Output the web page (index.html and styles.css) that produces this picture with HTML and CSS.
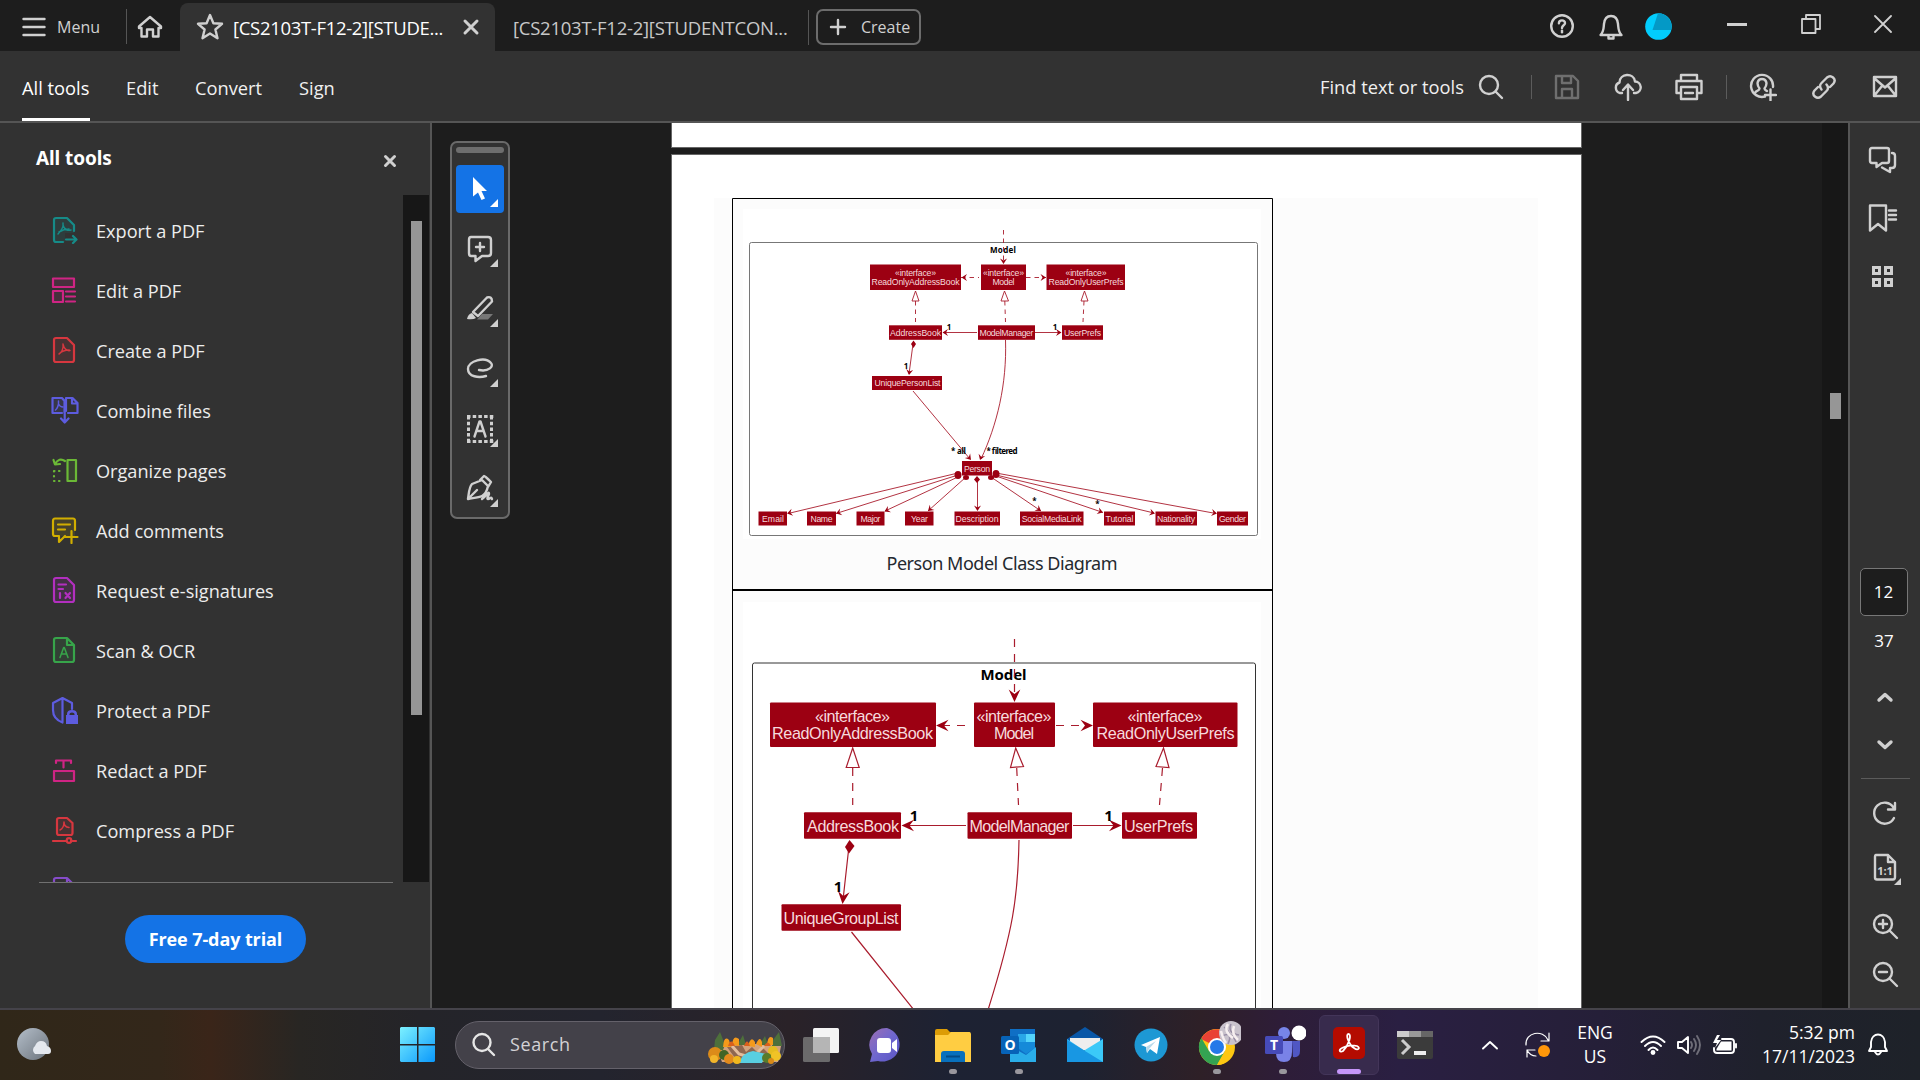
FILE: index.html
```html
<!DOCTYPE html>
<html lang="en">
<head>
<meta charset="utf-8">
<title>[CS2103T-F12-2][STUDENTCONNECT]</title>
<link rel="stylesheet" href="styles.css">
</head>
<body>
<header class="titlebar">
  <div class="menu-btn">
    <svg class="ico" width="24" height="20" viewBox="0 0 24 20"><path d="M1.500 2H22.500M1.500 10H22.500M1.500 18H22.500"/></svg>
    <span>Menu</span>
  </div>
  <div class="home-btn">
    <svg class="ico" width="26" height="24" viewBox="0 0 26 24"><path d="M2 11.500 13 2 24 11.500V13H21.500V21.500H16V14.500H10V21.500H4.500V13H2Z"/></svg>
  </div>
  <div class="tab active">
    <svg class="ico" width="28" height="28" viewBox="0 0 28 28"><path d="M14 2 17.400 10.200 26 10.800 19.400 16.500 21.500 25.200 14 20.500 6.500 25.200 8.600 16.500 2 10.800 10.600 10.200Z"/></svg>
    <span class="tab-name">[CS2103T-F12-2][STUDE...</span>
    <svg class="ico bold" width="18" height="18" viewBox="0 0 18 18"><path d="M3 3 15 15M15 3 3 15"/></svg>
  </div>
  <div class="tab"><span class="tab-name">[CS2103T-F12-2][STUDENTCON...</span></div>
  <div class="create-btn">
    <svg class="ico" width="18" height="18" viewBox="0 0 18 18"><path d="M9 2V16M2 9H16"/></svg>
    <span>Create</span>
  </div>
  <div class="window-actions">
    <svg class="ico" width="26" height="26" viewBox="0 0 26 26"><circle cx="13" cy="13" r="10.800"/><path d="M9.900 10.300C10 6.300 16.200 6.600 16 10.200 15.900 12.400 13 12.300 13 15"/><path d="M13 17.600V19.200"/></svg>
    <svg class="ico" width="26" height="28" viewBox="0 0 26 28"><path d="M2.500 22H23.500C20 18.500 20.500 15 20 11 19.500 5.500 17 3 13 3S6.500 5.500 6 11C5.500 15 6 18.500 2.500 22Z"/><path d="M10.500 23V25.500H15.500V23"/></svg>
    <svg width="27" height="27" viewBox="0 0 27 27"><circle cx="13.500" cy="13.500" r="13.300" fill="#02cdfd"/><path d="M13 0.200A13.300 13.300 0 0 1 26 17H7.500Z" fill="#0499c6"/></svg>
    <svg class="ico wide" width="22" height="20" viewBox="0 0 22 20"><path d="M1 9.500H21"/></svg>
    <svg class="ico thin" width="20" height="20" viewBox="0 0 20 20"><path d="M1 5H14.500V19H1ZM5 5V1H19V15H15"/></svg>
    <svg class="ico thin" width="18" height="18" viewBox="0 0 18 18"><path d="M1 1 17 17M17 1 1 17"/></svg>
  </div>
</header>

<nav class="toolbar">
  <div class="nav-item current">All tools</div>
  <div class="nav-item">Edit</div>
  <div class="nav-item">Convert</div>
  <div class="nav-item">Sign</div>
  <div class="toolbar-right">
    <span class="find">Find text or tools</span>
    <svg class="ico" width="26" height="26" viewBox="0 0 26 26"><circle cx="11" cy="11" r="9"/><path d="M17.500 17.500 24 24"/></svg>
    <i class="sep"></i>
    <svg class="ico dim" width="26" height="26" viewBox="0 0 26 26"><path d="M2 2H19L24 7V24H2ZM8 2V9H17V2M8 24V15H18V24"/></svg>
    <svg class="ico cloud" width="30" height="28" viewBox="0 0 30 28"><path d="M9 20H7A5.500 5.500 0 0 1 6.500 9.500C6.500 0 21 -.5 22 8.500A5.800 5.800 0 0 1 23 20H21M15 27V12M10 17 15 11.500 20 17"/></svg>
    <svg class="ico" width="28" height="28" viewBox="0 0 28 28"><path d="M6 8V2H22V8M6 20H1.500V8H26.500V20H22M6 14H22V26H6ZM10 20H18"/></svg>
    <i class="sep near"></i>
    <svg class="ico person" width="28" height="28" viewBox="0 0 28 28"><path d="M16 23.500A11 11 0 1 1 24 14M6 20C7 17 10.500 18 10.500 15.500 7 11 8.500 6 13 6S19 11 15.500 15.500C15.500 17 16 17 18 18M21.500 16.500V27.500M16 22H27"/></svg>
    <svg class="ico link" width="26" height="26" viewBox="0 0 26 26"><path d="M10.500 15.500C8 12.500 9 10.500 10.500 9L16 3.500C20 0 26 5 22.500 9.500L19 13M15.500 10.500C18 13.500 17 15.500 15.500 17L10 22.500C6 26 0 21 3.500 16.500L7 13"/></svg>
    <svg class="ico" width="26" height="24" viewBox="0 0 26 24"><path d="M2 2H24V21H2ZM2 3 13 12.500 24 3M2 21 10 11M24 21 16 11"/></svg>
  </div>
</nav>

<div class="workspace">
  <aside class="left-panel">
    <div class="panel-head"><h2>All tools</h2><svg class="ico bold" width="14" height="14" viewBox="0 0 14 14"><path d="M2.500 2.500 11.500 11.500M11.500 2.500 2.500 11.500"/></svg></div>
    <div class="tool-scroll">
      <ul class="tool-list">
        <li class="teal"><svg viewBox="0 0 28 28"><path class="tint" d="M3 2H16L23 9V17H14V26H3Z"/><path d="M12 26H5Q3 26 3 24V4Q3 2 5 2H16L23 9V15"/><path class="fine" d="M12 7C13 12 9 16 7 18M12 9C13 14 17 15 20 14M8 16Q13 13 18 13"/><path d="M15 23.500H25M22 20 25.500 23.500 22 27"/></svg>Export a PDF</li>
        <li class="pink"><svg viewBox="0 0 28 28"><path class="tint" d="M2 2.500H23V11H2ZM2 15H12V26H2Z"/><path d="M2 2.500H23V11H2ZM2 15H12V26H2ZM15 15.500H24M15 20.500H24M15 25.500H24"/></svg>Edit a PDF</li>
        <li class="red"><svg viewBox="0 0 28 28"><path class="tint" d="M5 2H16L23 9V24Q23 26 21 26H5Q3 26 3 24V4Q3 2 5 2Z"/><path d="M5 2H16L23 9V24Q23 26 21 26H5Q3 26 3 24V4Q3 2 5 2Z"/><path class="fine" d="M12 8C13 13 10 17 8 18M12 8C13 14 17 15 19 14.500M8 18Q12 14 18 14"/></svg>Create a PDF</li>
        <li class="indigo"><svg viewBox="0 0 28 28"><path class="tint" d="M1.500 2H11L14 4V17H1.500Z"/><path d="M11 17H1.500V2H11L13.500 5V17M17 17H26.500V7L21.500 2H15V15M21 2V7.500H26M13.700 15V25M10 22.500 13.700 26.500 17.500 22.500"/><path class="fine" d="M7.500 5C8 9 6 13 4.500 14M7.500 8Q9 11 12 11"/></svg>Combine files</li>
        <li class="lime"><svg viewBox="0 0 28 28"><path class="tint" d="M16.500 4H25V25H16.500Z"/><path d="M16.500 4H25V25H16.500ZM14 5Q8 1 4 8M2.500 4 4 8.500 9 8"/><path class="dots" d="M3 15H13M3 25H13M3 15V25"/></svg>Organize pages</li>
        <li class="yellow"><svg viewBox="0 0 28 28"><path class="tint" d="M2 3H24V20H2Z"/><path d="M24 14V5Q24 2.500 22 2.500H4Q2 2.500 2 5V18Q2 20 4 20H8V26L14 20M7 8.500H19M7 13.500H14M20.500 15V27M14.500 21H26.500"/></svg>Add comments</li>
        <li class="purple"><svg viewBox="0 0 28 28"><path class="tint" d="M5 2H16L23 9V24Q23 26 21 26H3V2Z"/><path d="M5 2H16L23 9V24Q23 26 21 26H5Q3 26 3 24V4Q3 2 5 2ZM7.500 8.500H15M7.500 13H12M9 17V22M14.500 17 19 22M19 17 14.500 22"/></svg>Request e-signatures</li>
        <li class="green"><svg viewBox="0 0 28 28"><path class="tint" d="M5 2H16L23 9V26H3V2Z"/><path d="M5 2H16L23 9V24Q23 26 21 26H5Q3 26 3 24V4Q3 2 5 2ZM16 2V9H23"/><path class="fine" d="M9 21.500 12.700 11.500H13.300L17 21.500M10.500 18H15.500"/></svg>Scan &amp; OCR</li>
        <li class="indigo"><svg viewBox="0 0 28 28"><path class="tint" d="M2 7 11.500 2V26Q2 22 2 15Z"/><path d="M21 13V7L11.500 2 2 7V14Q2 23 11.500 26.500M11.500 2V26"/><path class="solid" fill-rule="evenodd" d="M15 19H16V18Q16 14 21 14T26 18V19H27V28H15ZM18.500 19H23.500V18Q23.500 16.500 21 16.500T18.500 18Z"/></svg>Protect a PDF</li>
        <li class="pink"><svg viewBox="0 0 28 28"><path class="tint" d="M3 15H23V25H3Z"/><path d="M3 15H23V25H3ZM5 7V4.500H20V7M12.500 4.500V11.500"/></svg>Redact a PDF</li>
        <li class="red"><svg viewBox="0 0 28 28"><path class="tint" d="M6 2H16L21.500 7V19H6Z"/><path d="M8 2H16L21.500 7V17Q21.500 19 19.500 19H8Q6 19 6 17V4Q6 2 8 2ZM2 25H15M20 25H25"/><circle cx="18" cy="24.500" r="2.300"/><path class="fine" d="M13 6Q13 12 9 14M13 6Q13 11 18 11.500"/></svg>Compress a PDF</li>
        <li class="violet"><svg viewBox="0 0 28 28"><path d="M5 2H16L23 9V24Q23 26 21 26H5Q3 26 3 24V4Q3 2 5 2ZM16 2V9H23"/></svg></li>
      </ul>
      <div class="scroll-track"><div class="scroll-thumb"></div></div>
    </div>
    <div class="trial"><button>Free 7-day trial</button></div>
  </aside>

  <main class="viewer">
    <div class="quick-tools">
      <div class="grip"></div>
      <div class="quick on"><svg width="48" height="48" viewBox="0 0 48 48"><path d="M17 12 31 26H25.500L29 33.500 25.500 35 22 27.500 17 31.500Z" fill="#fff"/><path class="corner" d="M42 34V42H34Z"/></svg></div>
      <div class="quick"><svg class="ico" width="48" height="48" viewBox="0 0 48 48"><path d="M15 12H32Q35 12 35 15V28Q35 31 32 31H26L19.500 36V31H15Q13 31 13 28V15Q13 12 15 12ZM24 18V26M20 22H28"/><path class="corner" d="M42 34V42H34Z"/></svg></div>
      <div class="quick"><svg class="ico" width="48" height="48" viewBox="0 0 48 48"><path d="M17 27 31 12.500Q36 11 36 16.500L22 31Z"/><path d="M11 34Q12 29 16 28L20 33Q17 35 11 34Z" fill="#d0d0d0" stroke="none"/><path d="M26 29H37L32 34.500H21Z" fill="#777" stroke="none"/><path class="corner" d="M42 34V42H34Z"/></svg></div>
      <div class="quick"><svg class="ico" width="48" height="48" viewBox="0 0 48 48"><path d="M23 25C33 27 38 21 35 18 29 11 12 16 12 24 12 32 23 33 30 31"/><path class="corner" d="M42 34V42H34Z"/></svg></div>
      <div class="quick"><svg class="ico" width="48" height="48" viewBox="0 0 48 48"><path class="marquee" d="M12.500 11V37M35.500 11V37"/><path class="marquee" d="M11 11.500H38M11 36.500H38"/><path d="M18.500 31.500 23.500 16.500H24.500L29.500 31.500M20.500 26H27.500"/><path class="corner" d="M42 34V42H34Z"/></svg></div>
      <div class="quick"><svg class="ico" width="48" height="48" viewBox="0 0 48 48"><path d="M12 34C13 28 13 22 16 19L26 15 32 21C31 26 30 29 26 31 22 33 16 33 12 34ZM12 34 21 25M24 15 28 11Q29 11 35 17L32 22M26 34C30 31 32 27 33 28S30 34 32 34 35 31 36 34"/><path class="corner" d="M42 34V42H34Z"/></svg></div>
    </div>
    <div class="pages">
      <div class="page previous"></div>
      <div class="page">
        <svg class="diagram" width="909" height="854" viewBox="672 155 909 854">
          <defs>
            <g id="open-head"><path d="M-5.500-3.500 0 0-5.500 3.500-3.500 0Z"/></g>
            <g id="big-head"><path d="M-12.500-5.800 0 0-12.500 5.800-8 0Z"/></g>
          </defs>
          <rect class="paper" x="714" y="198" width="824" height="830"/>
          <rect x="743" y="209" width="518" height="330" fill="#fff"/>
          <rect x="743" y="602" width="518" height="430" fill="#fff"/>
          <path class="table" d="M732.500 1010V198.500H1272.500V1010"/><path class="table heavy" d="M732 590H1273"/>
          <text class="caption" x="1002" y="570" textLength="231">Person Model Class Diagram</text>

          <g class="small">
            <rect class="frame" x="749.500" y="242.500" width="508" height="293" rx="2"/>
            <text class="lbl" x="1003" y="252.500" textLength="26">Model</text>
            <path class="edge dash" d="M1003.500 230V261M961 277.500H979M1026 277.500H1046M915.500 301V322M1004.800 301 1005.500 322M1084 301 1083 322"/>
            <path class="edge" d="M977 332.500H943M1035 332.500H1061M913 344 909 374M913 391 970 459M1005.500 340C1007 384 997 425 981 459"/>
            <path class="edge hollow" d="M915.500 291 919 301H912ZM1004.500 291 1008.500 301H1001ZM1084.500 291 1088 301H1081Z"/>
            <path class="edge" d="M958 473 788 513.500M958 475 836 513.500M960 476 885 511M966 477 928 511M977.500 478V510M991 477 1041 511M996 476 1103 512.500M996 475 1154 513M996 473 1216 513.500"/>
            <g class="fill">
              <use href="#open-head" transform="translate(1003.500 264) rotate(90)"/><use href="#open-head" transform="translate(961.500 277.500) rotate(180)"/><use href="#open-head" transform="translate(1046 277.500)"/>
              <use href="#open-head" transform="translate(942.500 332.500) rotate(180)"/><use href="#open-head" transform="translate(1061.500 332.500)"/><use href="#open-head" transform="translate(909 375) rotate(97)"/>
              <use href="#open-head" transform="translate(971 460) rotate(50)"/><use href="#open-head" transform="translate(980 460) rotate(110)"/>
              <use href="#open-head" transform="translate(787 513.500) rotate(167)"/><use href="#open-head" transform="translate(836 513.500) rotate(162)"/><use href="#open-head" transform="translate(884.500 511.500) rotate(154)"/><use href="#open-head" transform="translate(928 511) rotate(138)"/><use href="#open-head" transform="translate(977.500 511) rotate(90)"/>
              <use href="#open-head" transform="translate(1041 511) rotate(35)"/><use href="#open-head" transform="translate(1103 512.500) rotate(19)"/><use href="#open-head" transform="translate(1155 513.500) rotate(14)"/><use href="#open-head" transform="translate(1217 513.500) rotate(10)"/>
              <path d="M913.500 340.500 916 344 913.500 348 911 344ZM977 476 980 479.500 977 483 974 479.500Z"/>
              <ellipse cx="958" cy="475" rx="3.500" ry="4"/><ellipse cx="996" cy="474" rx="3.500" ry="4"/><ellipse cx="966" cy="477.500" rx="3" ry="2.500"/><ellipse cx="991" cy="477.500" rx="3" ry="2.500"/>
            </g>
            <g class="fill">
              <rect x="870" y="264.500" width="91" height="25.500"/><rect x="981" y="264.500" width="45" height="25.500"/><rect x="1046.500" y="264.500" width="78.500" height="25.500"/>
              <rect x="889" y="325.300" width="53" height="14.500"/><rect x="978" y="325.300" width="57" height="14.500"/><rect x="1062" y="325.300" width="41" height="14.500"/>
              <rect x="872" y="376" width="70" height="14"/><rect x="962" y="461" width="30" height="14.500"/>
              <rect x="758.500" y="511.500" width="28.500" height="14"/><rect x="807" y="511.500" width="29" height="14"/><rect x="856.500" y="511.500" width="28" height="14"/><rect x="905" y="511.500" width="28.500" height="14"/><rect x="954.500" y="511.500" width="45.500" height="14"/><rect x="1020" y="511.500" width="63.500" height="14"/><rect x="1104" y="511.500" width="31" height="14"/><rect x="1155.500" y="511.500" width="41.500" height="14"/><rect x="1217" y="511.500" width="31" height="14"/>
            </g>
            <g class="node">
              <text x="915.500" y="276" textLength="41">«interface»</text><text x="915.500" y="285" textLength="88">ReadOnlyAddressBook</text>
              <text x="1003.500" y="276" textLength="41">«interface»</text><text x="1003.500" y="285" textLength="22">Model</text>
              <text x="1086" y="276" textLength="41">«interface»</text><text x="1086" y="285" textLength="75">ReadOnlyUserPrefs</text>
              <text x="915.500" y="336" textLength="51">AddressBook</text><text x="1006.500" y="336" textLength="54">ModelManager</text><text x="1082.500" y="336" textLength="37">UserPrefs</text>
              <text x="907.500" y="386" textLength="66">UniquePersonList</text><text x="977" y="471.500" textLength="26">Person</text>
              <text x="773" y="521.700" textLength="22">Email</text><text x="821.500" y="521.700" textLength="22">Name</text><text x="870.500" y="521.700" textLength="20">Major</text><text x="919.500" y="521.700" textLength="17">Year</text><text x="977" y="521.700" textLength="43">Description</text><text x="1051.700" y="521.700" textLength="60">SocialMediaLink</text><text x="1119.500" y="521.700" textLength="28">Tutorial</text><text x="1176" y="521.700" textLength="38">Nationality</text><text x="1232.500" y="521.700" textLength="27">Gender</text>
            </g>
            <g class="lbl"><text x="949" y="330">1</text><text x="1055" y="330">1</text><text x="906" y="369">1</text><text x="958.500" y="454" textLength="15">* all</text><text x="1002" y="454" textLength="31">* filtered</text><text x="1034.500" y="504">*</text><text x="1097.500" y="507">*</text></g>
          </g>

          <g class="large">
            <path class="frame dark" d="M752.500 1010V665Q752.500 663 754.500 663H1253.500Q1255.500 663 1255.500 665V1010"/>
            <text class="lbl" x="1003.500" y="680" textLength="46">Model</text>
            <path class="edge dash" d="M1014.500 639V697M965 725.500H940M1056 725.500H1090M852.700 768V805M1016.700 768 1018.500 805M1162.500 768 1159.500 805"/>
            <path class="edge hollow" d="M852.700 748 859.200 767.500H846.200ZM1015.700 748 1023.500 766.500 1010.500 767.500ZM1163.500 748 1169 767.500 1156 766.500Z"/>
            <path class="edge" d="M966 825.500H905M1073 825.500H1118M849 846 843 900M851.500 932 914 1010M1019 840C1018 898 1013 930 988 1010"/>
            <g class="fill">
              <use href="#big-head" transform="translate(1014.500 702) rotate(90)"/><use href="#big-head" transform="translate(936 725.500) rotate(180)"/><use href="#big-head" transform="translate(1093 725.500)"/><use href="#big-head" transform="translate(901.500 825.500) rotate(180)"/><use href="#big-head" transform="translate(1121.500 825.500)"/><use href="#big-head" transform="translate(842.500 904) rotate(96)"/>
              <path d="M849.500 840 854.500 846 849 853.500 845 847Z"/>
              <rect x="770" y="702.500" width="166" height="44.500" rx="1"/><rect x="974" y="702.500" width="81" height="44.500" rx="1"/><rect x="1093" y="702.500" width="144.500" height="44.500" rx="1"/>
              <rect x="804" y="812.300" width="97" height="26.500" rx="1"/><rect x="967.500" y="812.300" width="104.500" height="26.500" rx="1"/><rect x="1122" y="812.300" width="75" height="26.500" rx="1"/><rect x="781.500" y="904.300" width="119.500" height="26.500" rx="1"/>
            </g>
            <g class="node">
              <text x="852.500" y="721.500" textLength="75">«interface»</text><text x="852.500" y="738.700" textLength="161">ReadOnlyAddressBook</text>
              <text x="1014" y="721.500" textLength="75">«interface»</text><text x="1014" y="738.700" textLength="40">Model</text>
              <text x="1165" y="721.500" textLength="75">«interface»</text><text x="1165.500" y="738.700" textLength="138">ReadOnlyUserPrefs</text>
              <text x="853" y="831.500" textLength="92">AddressBook</text><text x="1019.500" y="831.500" textLength="100">ModelManager</text><text x="1158.500" y="831.500" textLength="69">UserPrefs</text><text x="841" y="923.500" textLength="115">UniqueGroupList</text>
            </g>
            <g class="lbl"><text x="914" y="820.500">1</text><text x="1108.500" y="820.500">1</text><text x="838" y="891.500">1</text></g>
          </g>
        </svg>
      </div>
    </div>
    <div class="doc-track"><div class="doc-thumb"></div></div>
  </main>

  <aside class="right-rail">
    <svg class="ico" width="30" height="30" viewBox="0 0 30 30"><path d="M4 3H19Q21 3 21 5V16Q21 18 19 18H14L8.500 22V18H4Q2 18 2 16V5Q2 3 4 3ZM24 8Q27 8 27 11V20Q27 23 24 23H22V27L14 22.500"/></svg>
    <svg class="ico" width="30" height="30" viewBox="0 0 30 30"><path d="M2 2.500H18V27.500L10 21 2 27.500ZM21 7.500H28M21 12H28M21 16.500H28"/></svg>
    <svg class="ico boxy" width="30" height="30" viewBox="0 0 30 30"><path d="M5.500 6.500H11.500V12.500H5.500ZM17.500 6.500H23.500V12.500H17.500ZM5.500 18.500H11.500V24.500H5.500ZM17.500 18.500H23.500V24.500H17.500Z"/></svg>
    <div class="page-now">12</div>
    <div class="page-total">37</div>
    <svg class="ico chev" width="20" height="12" viewBox="0 0 20 12"><path d="M4 9 10 3.500 16 9"/></svg>
    <svg class="ico chev" width="20" height="12" viewBox="0 0 20 12"><path d="M4 3 10 8.500 16 3"/></svg>
    <div class="rail-line"></div>
    <svg class="ico" width="30" height="30" viewBox="0 0 30 30"><path d="M24 19A10.500 10.500 0 1 1 23.500 8.500M25 4V10.500H18"/></svg>
    <svg class="ico" width="34" height="34" viewBox="0 0 34 34"><path d="M8 4H20L27 11V26Q27 28.500 25 28.500H9Q7 28.500 7 26.500V6Q7 4 8 4ZM20 4V11H27"/><text x="17" y="24">1:1</text><path class="corner" d="M33 27V34H26Z"/></svg>
    <svg class="ico" width="30" height="30" viewBox="0 0 30 30"><circle cx="13" cy="12" r="9"/><path d="M19.500 18.500 27 26M13 8V16M9 12H17"/></svg>
    <svg class="ico" width="30" height="30" viewBox="0 0 30 30"><circle cx="13" cy="12" r="9"/><path d="M19.500 18.500 27 26M9 12H17"/></svg>
  </aside>
</div>

<footer class="taskbar">
  <svg class="weather" width="36" height="36" viewBox="0 0 36 36"><circle cx="16" cy="17" r="16" fill="url(#moon)"/><defs><linearGradient id="moon" x2="1" y2="1"><stop stop-color="#b4bec9"/><stop offset="1" stop-color="#6c747d"/></linearGradient></defs><path d="M18 27A5 5 0 0 1 18 19Q20 14 24 14 29 14 30 19 34 20 34 24 34 27 31 27Z" fill="#e4e8ee"/></svg>
  <svg class="start" width="36" height="36" viewBox="0 0 36 36"><defs><linearGradient id="win" gradientUnits="userSpaceOnUse" x1="0" y1="0" x2="36" y2="36"><stop stop-color="#7cf1ff"/><stop offset="1" stop-color="#0796fb"/></linearGradient></defs><path fill="url(#win)" d="M1 0H17V17H0V1ZM18.500 0H34L35 1V17H18.500ZM0 18.500H17V35H1L0 34ZM18.500 18.500H35V34L34 35H18.500Z"/></svg>
  <div class="search">
    <svg class="ico" width="26" height="26" viewBox="0 0 26 26"><circle cx="11" cy="10.500" r="8.500"/><path d="M17 17 23 23"/></svg>
    <span>Search</span>
    <svg class="scene" width="75" height="32" viewBox="0 0 75 32"><path d="M8 15 20 12H70L73 14 70 30H14Z" fill="#d3a37d"/><path d="M19 15 34 13 38 20 44 15 50 21 54 15 61 22 47 30H30Z" fill="#8f6750"/><path d="M24 14 31 22 38 24M56 14 50 20" fill="none" stroke="#e3bd9c" stroke-width="3"/><path d="M31 31Q35 20 45 19L58 22 54 31Z" fill="#59cfe1"/><path d="M7 8 12 0 14 5 17 13 15 18H6ZM65 8 71 0 74 14H64ZM31 10 35 3 38 13H31ZM54 9 57 4 60 13H54Z" fill="#4e703b"/><path d="M15 15Q16 3 21 8L23 15ZM24 13Q25 2 31 7L31 14ZM40 14Q43 3 47 10L47 15ZM48 12Q52 3 54 10V15ZM59 13Q60 2 65 6V13Z" fill="#f49a1b"/><path d="M20 14Q23 5 27 14ZM36 14Q39 5 42 14ZM56 14Q60 7 63 14Z" fill="#d9601c"/><circle cx="7" cy="22" r="7" fill="#dc8b19"/><circle cx="6" cy="27" r="4" fill="#f2b52a"/><circle cx="16" cy="23" r="5" fill="#3f6526"/><circle cx="21" cy="27" r="5" fill="#e28a1c"/><circle cx="29" cy="28" r="4" fill="#f0b71e"/><circle cx="65" cy="19" r="5" fill="#e5bd20"/><circle cx="59" cy="26" r="5" fill="#587c2b"/><circle cx="68" cy="24" r="5" fill="#f0c326"/><circle cx="63" cy="29" r="3" fill="#d98a18"/></svg>
  </div>
  <div class="apps">
    <div class="app"><svg width="38" height="38" viewBox="0 0 38 38"><rect x="11" y="2" width="26" height="25" rx="1.500" fill="#f4f4f4"/><rect x="1" y="11" width="27" height="25" rx="1.500" fill="#777" opacity=".85"/><path d="M11 11H28V27H11Z" fill="#b5b5b5"/></svg></div>
    <div class="app"><svg width="38" height="38" viewBox="0 0 38 38"><defs><linearGradient id="chat" x2="1" y2="1"><stop stop-color="#9d6fb3"/><stop offset=".5" stop-color="#6f67cf"/><stop offset="1" stop-color="#5a55c4"/></linearGradient></defs><path d="M19 2A17 17 0 1 1 10 35L2 36 4 28A17 17 0 0 1 19 2Z" fill="url(#chat)"/><rect x="9" y="12" width="14" height="15" rx="3" fill="#fff"/><path d="M24 17 29 13V26L24 22Z" fill="#fff"/></svg></div>
    <div class="app running"><svg width="38" height="38" viewBox="0 0 38 38"><path d="M1 5Q1 3 3 3H13L16 6H36V14H1Z" fill="#dc9c06"/><path d="M1 9H14L17 6H35Q37 6 37 8V36H1Z" fill="#ffcd42"/><path d="M7 36V28Q7 25 10 25H28Q31 25 31 28V36Z" fill="#0870bd"/><path d="M12 30.500H26" stroke="#034b86" stroke-width="2"/></svg></div>
    <div class="app running"><svg width="38" height="38" viewBox="0 0 38 38"><path d="M10 3H35V35H10Z" fill="#0f6fc5"/><path d="M18 8H26V16H18Z" fill="#29a6e8"/><path d="M26 8H35V16H26Z" fill="#54d4fb"/><path d="M18 16H35V22L26 28 18 22Z" fill="#158ad9"/><path d="M10 20 26 29 36 21V36H10Z" fill="#2aaee9"/><rect x="1" y="10" width="18" height="18" rx="1.500" fill="#0763b7"/><text class="logo-letter" x="10" y="24">O</text></svg></div>
    <div class="app"><svg width="38" height="38" viewBox="0 0 38 38"><path d="M1 13 19 1 37 13V20H1Z" fill="#0957a7"/><path d="M4 12H34V24H4Z" fill="#eee"/><path d="M1 13 19 25 1 36Z" fill="#37bbf1"/><path d="M37 13V36H1L19 24Z" fill="#3bc9f8"/><path d="M1 14 37 36H1Z" fill="#1897e3"/></svg></div>
    <div class="app"><svg width="38" height="38" viewBox="0 0 38 38"><circle cx="19" cy="19" r="16.500" fill="#1d98d4"/><path d="M9 19 28 11 25 28 18 23 15 27 14 21Z" fill="#fff"/><path d="M14 21 24 15 17 23 15 27Z" fill="#b8d9ea"/></svg></div>
    <div class="app running"><svg width="48" height="48" viewBox="0 0 48 48"><circle cx="24" cy="26" r="18" fill="#fdc712"/><path d="M24 26 8 18A18 18 0 0 1 40 18Z" fill="#e94235"/><path d="M8.400 17 16 30 32 30 24 44A18 18 0 0 1 8.400 17Z" fill="#34a352"/><path d="M24 44 32 30 40 20A18 18 0 0 1 24 44Z" fill="#fdc712"/><circle cx="24" cy="26" r="9" fill="#fff"/><circle cx="24" cy="26" r="7" fill="#2579e8"/><circle cx="38" cy="12" r="12" fill="#c9c2cc"/><path d="M31 6Q40 12 35 23M38 3Q34 12 46 14M29 15Q39 10 43 21" fill="none" stroke="#988da5" stroke-width="1.500"/><path d="M35 3Q30 10 40 17M41 5Q38 13 45 19M28 10Q30 18 33 22" fill="none" stroke="#f7eff0" stroke-width="2.500"/></svg></div>
    <div class="app running"><svg width="46" height="40" viewBox="0 0 46 40"><circle cx="24" cy="8" r="6" fill="#7785e8"/><path d="M16 16H32V27Q32 37 24 37T16 28Z" fill="#7982e7"/><path d="M32 16H40V26Q40 33 33 32Z" fill="#5057c3"/><rect x="5" y="11" width="18" height="18" rx="1.500" fill="#464bb8"/><text class="logo-letter" x="14" y="25">T</text><circle cx="39" cy="8" r="7.500" fill="#fff"/></svg></div>
    <div class="app focused"><svg width="34" height="34" viewBox="0 0 34 34"><rect x="1" y="1" width="32" height="32" rx="5" fill="#b40b00"/><path d="M16.500 8C20 8 17 19 11 25 8 27 6 24 10 22 15 19 21 19 25 20 29 22 26 25 22 22 17 19 13 8 16.500 8Z" fill="none" stroke="#fff" stroke-width="1.800"/></svg></div>
    <div class="app"><svg width="38" height="38" viewBox="0 0 38 38"><path d="M1 7H37V31Q37 33 35 33H3Q1 33 1 31Z" fill="#3b3b3b"/><path d="M1 5H13V11H1Z" fill="#ccc"/><path d="M13 5H25V11H13Z" fill="#999"/><path d="M25 5H37V11H25Z" fill="#666"/><path d="M6 14 13 21 6 28" fill="none" stroke="#ccc" stroke-width="3"/><path d="M18 27H30" stroke="#eee" stroke-width="4"/></svg></div>
  </div>
  <div class="tray">
    <svg class="ico" width="18" height="12" viewBox="0 0 18 12"><path d="M2 9.500 9 3 16 9.500"/></svg>
    <svg class="ico sync" width="26" height="28" viewBox="0 0 26 28"><path d="M1 14C0 1 18-2 23 9M24 2V10H16M11 25Q5 25 2 19M10 19H2V26"/><circle cx="19" cy="20" r="6" fill="#ff970a" stroke="none"/></svg>
    <div class="lang">ENG<br>US</div>
    <svg class="ico wifi" width="26" height="22" viewBox="0 0 26 22"><path d="M1.500 8Q13-3 24.500 8M5 12Q13 4 21 12M8.500 16Q13 11 17.500 16"/><circle cx="13" cy="18.500" r="1.500" fill="#fff"/></svg>
    <svg class="ico speaker" width="26" height="22" viewBox="0 0 26 22"><path d="M2 8H6L12 3V19L6 14H2Z"/><path d="M15 8Q17 11 15 14M18 5Q22 11 18 17M21 2Q27 11 21 20" opacity=".35"/></svg>
    <svg class="ico battery" width="26" height="22" viewBox="0 0 26 22"><path d="M10 5H19Q22 5 22 8V16Q22 19 19 19H5Q2 19 2 16V14M24 10V13.500"/><path d="M9 7.500H19.500V16.500H4.500V15Z" fill="#fff" stroke="none"/><path d="M5 1 1 9H5L3 14 9 6H5L8 1Z" fill="#fff" stroke="none"/></svg>
    <div class="clock">5:32 pm<br>17/11/2023</div>
    <svg class="ico" width="22" height="24" viewBox="0 0 22 24"><path d="M2 18H20L18 14V9C17-1 5-1 4 9V14ZM8 19Q11 24 14 19"/></svg>
  </div>
</footer>
</body>
</html>
```
FILE: styles.css
```css
* { box-sizing: border-box; }
body { margin: 0; width: 1920px; height: 1080px; overflow: hidden; display: flex; flex-direction: column; background: #1d1d1d; color: #f0f0f0; font-family: "Open Sans", "Noto Sans", sans-serif; font-size: 18px; }
svg { display: block; flex: none; }
.ico { fill: none; stroke: #d0d0d0; stroke-width: 2.4; stroke-linejoin: round; stroke-linecap: round; }
.bold { stroke-width: 3; }
.thin { stroke-width: 1.8; }
.wide { stroke-width: 3; stroke-linecap: butt; }
.dim { stroke: #6f6f6f; }
.corner { fill: #d0d0d0; stroke: none; }

.titlebar { height: 51px; flex: none; display: flex; align-items: center; background: #1d1d1d; white-space: nowrap; }
.menu-btn { width: 127px; height: 35px; margin-top: 2px; padding-left: 22px; display: flex; align-items: center; gap: 12px; border-right: 1px solid #555; font-size: 16px; color: #d0d0d0; }
.menu-btn span { margin-left: -1px; }
.home-btn { width: 53px; padding-left: 10px; margin-top: 2px; }
.tab { height: 48px; align-self: flex-end; display: flex; align-items: center; color: #c8c8c8; font-size: 18.500px; width: 315px; padding-left: 18px; }
.tab:not(.active) { width: 313px; }
.tab-name { letter-spacing: -0.250px; }
.tab.active { background: #323232; border-radius: 8px 8px 0 0; color: #fff; padding-left: 16px; }
.tab.active .tab-name { width: 229px; margin-left: 9px; letter-spacing: -0.320px; }
.create-btn { width: 105px; height: 36px; margin-top: 3px; border: 2px solid #6c6c6c; border-radius: 7px; margin-left: 8px; display: flex; align-items: center; padding-left: 11px; gap: 14px; font-size: 16px; color: #d0d0d0; position: relative; }
.create-btn::before { content: ""; position: absolute; left: -10px; top: -1px; height: 35px; width: 1px; background: #555; }
.window-actions { margin-left: auto; padding-right: 28px; display: flex; align-items: center; }
.window-actions svg:nth-child(1) { margin-top: 1px; }
.window-actions svg:nth-child(2) { margin: 3px 0 0 23px; }
.window-actions svg:nth-child(3) { margin: 2px 0 0 21px; }
.window-actions svg:nth-child(4) { margin: -1px 0 0 54px; }
.window-actions svg:nth-child(5) { margin: -3px 0 0 53px; }
.window-actions svg:nth-child(6) { margin: -4px 0 0 53px; }

.toolbar { height: 72px; flex: none; display: flex; background: #323232; border-bottom: 2px solid #555; padding-left: 22px; line-height: 74px; font-size: 18.300px; white-space: nowrap; }
.nav-item { margin-right: 36px; height: 70px; }
.nav-item.current { color: #fff; border-bottom: 3px solid #fff; width: 68px; }
.nav-item:nth-child(2) { width: 33px; }
.nav-item:nth-child(3) { width: 68px; }
.toolbar-right { margin-left: auto; height: 72px; padding-right: 22px; display: flex; align-items: center; }
.find { width: 143px; margin-right: 15px; }
.sep { width: 1px; height: 24px; background: #5c5c5c; margin: 0 22px 0 27px; }
.sep.near { margin-left: 23px; }
.cloud { margin: 0 32px 0 33px; }
.person { margin-right: 34px; }
.link { margin-right: 35px; }

.workspace { flex: none; height: 885px; display: flex; }
.left-panel { width: 432px; background: #323232; border-right: 2px solid #555; display: flex; flex-direction: column; }
.panel-head { height: 72px; flex: none; display: flex; justify-content: space-between; padding: 19px 33px 0 36px; }
.panel-head h2 { margin: 0; font-size: 20px; line-height: 32px; color: #fff; white-space: nowrap; letter-spacing: 0.250px; font-family: "Noto Sans", sans-serif; font-size: 19px; letter-spacing: -.1px; }
.panel-head svg { margin-top: 12px; }
.tool-scroll { height: 687px; flex: none; display: flex; justify-content: space-between; padding-right: 1px; overflow: hidden; }
.tool-list { list-style: none; margin: 0; padding: 6px 0 0 51px; width: 403px; }
.tool-list li { height: 60px; display: flex; align-items: center; gap: 17px; color: #ededed; font-size: 18.150px; }
.tool-list svg { width: 28px; height: 28px; margin-top: -2px; fill: none; stroke: var(--c); stroke-width: 2.200; stroke-linejoin: round; stroke-linecap: round; }
.tool-list .tint { fill: var(--c); fill-opacity: .13; stroke: none; }
.tool-list .fine { stroke-width: 1.500; }
.tool-list .dots { stroke-dasharray: 0.500 4.500; }
.tool-list .solid { fill: var(--c); stroke: none; }
.teal { --c: #168b88; } .pink { --c: #cf2484; } .red { --c: #d7373f; } .indigo { --c: #5d5cdf; } .lime { --c: #6bb936; } .yellow { --c: #d1ae00; } .purple { --c: #b22fbf; } .green { --c: #37a54a; } .violet { --c: #864cc9; }
.scroll-track { width: 26px; background: #171717; padding: 26px 0 0 8px; }
.scroll-thumb { width: 11px; height: 494px; background: #969696; }
.trial { margin: 0 37px 0 39px; border-top: 1px solid #707070; padding: 32px 0 0 86px; }
.trial button { width: 181px; height: 48px; padding: 0; border: 0; border-radius: 24px; background: #1473e6; color: #fff; font: bold 18px "Open Sans", sans-serif; letter-spacing: -.1px; }

.viewer { width: 1416px; display: flex; background: #1d1d1d; }
.quick-tools { width: 60px; height: 378px; margin: 18px 161px 0 18px; background: #323232; border: 2px solid #6a6a6a; border-radius: 7px; padding: 4px; flex: none; }
.grip { height: 6px; border-radius: 3px; background: #6e6e6e; margin-bottom: 12px; }
.quick { width: 48px; height: 48px; margin-bottom: 12px; }
.quick.on { background: #1473e6; border-radius: 4px; }
.quick.on .corner { fill: #fff; }
.marquee { stroke-width: 3; stroke-linecap: butt; stroke-dasharray: 3.500 2.200; }
.pages { width: 911px; flex: none; height: 885px; overflow: hidden; }
.page { height: 854px; background: #fff; border: 1px solid #666; border-bottom: 0; overflow: hidden; }
.page.previous { height: 25px; border-top: 0; border-bottom: 1px solid #666; margin-bottom: 6px; }
.doc-track { width: 26px; margin-left: auto; background: #171717; padding: 270px 0 0 8px; }
.doc-thumb { width: 11px; height: 26px; background: #969696; }

.diagram text { text-anchor: middle; }
.paper { fill: #fcfcfc; }
.table { fill: none; stroke: #000; stroke-width: 1; }
.table.heavy { stroke-width: 2; }
.caption { font: 18px "Noto Sans", sans-serif; fill: #24292f; }
.frame { fill: none; stroke: #777; stroke-width: 1; }
.frame.dark { stroke: #333; }
.edge { fill: none; stroke: #a91c2d; stroke-width: .9; }
.edge.dash { stroke-dasharray: 4.500 4; }
.edge.hollow { fill: #fff; }
.fill { fill: #9c0012; }
.large .edge { stroke-width: 1.200; }
.large .edge.dash { stroke-dasharray: 8 7; }
.node { fill: #f6dadd; font-family: "Liberation Sans", sans-serif; font-size: 8.700px; }
.large .node { font-size: 16.200px; }
.lbl { fill: #000; font-family: "Noto Sans", sans-serif; font-weight: bold; font-size: 8px; }
.large .lbl { font-size: 15px; }

.right-rail { width: 72px; background: #323232; border-left: 2px solid #555; display: flex; flex-direction: column; align-items: center; padding-top: 22px; }
.right-rail > svg:nth-child(-n+3) { margin-bottom: 28px; margin-right: 4px; }
.boxy { stroke-width: 3; stroke-linejoin: miter; }
.page-now { width: 48px; height: 48px; border: 1px solid #777; border-radius: 5px; background: #1d1d1d; text-align: center; line-height: 45px; margin-top: 249px; flex: none; margin-left: -3px; color: #fff; font-size: 17px; }
.page-total { line-height: 24px; margin: 13px 2px 0 0; color: #fff; font-size: 17px; }
.chev { margin: 38px 1px 0 0; stroke-width: 3.400; }
.chev + .chev { margin-top: 36px; }
.rail-line { width: 49px; height: 1px; background: #5b5b5b; margin-top: 27px; flex: none; }
.rail-line + svg { margin: 20px 0 22px; }
.right-rail svg:nth-last-child(3) { overflow: visible; margin-bottom: 27px; }
.right-rail svg:last-child { margin-top: 18px; }
.right-rail text { fill: #d0d0d0; stroke: none; text-anchor: middle; font: bold 11px "Open Sans", sans-serif; }

.taskbar { height: 72px; flex: none; display: flex; align-items: center; border-top: 2px solid #45434a; padding-bottom: 1px; background: linear-gradient(90deg, #302719 0, #33271a 160px, #3a2519 210px, #282623 300px, #242429 420px, #23242e 600px, #2a2228 790px, #1d2233 950px, #1d2231 1080px, #2e2027 1200px, #2e1d38 1280px, #2a1f42 1400px, #251f38 1600px, #1f212c 1760px, #1e2229 1920px); color: #fff; }
.weather { margin-left: 17px; }
.start { margin-left: 347px; }
.search { margin-left: 19px; width: 330px; height: 48px; border: 1px solid #64616a; border-radius: 24px; background: #434149; display: flex; align-items: center; padding-left: 15px; font-size: 18px; color: #d3d2d5; }
.search span { width: 211px; padding-left: 13px; margin-top: -2px; letter-spacing: .6px; }
.search .ico { stroke: #e6e6e6; }
.scene { margin-top: 6px; }
.apps { display: flex; margin-left: 3px; }
.app { width: 66px; height: 60px; display: flex; align-items: center; justify-content: center; position: relative; }
.app.running::after { content: ""; position: absolute; bottom: 1px; left: 29px; width: 8px; height: 5px; border-radius: 3px; background: #99979d; }
.app.focused { width: 60px; margin: 0 3px; background: #382b4d; border: 1px solid #433559; border-radius: 6px; }
.app.focused::after { content: ""; position: absolute; bottom: 0; left: 17px; width: 24px; height: 5px; border-radius: 3px; background: #c696fa; }
.app.focused svg { margin-top: -3px; }
.logo-letter { fill: #fff; font: bold 14px "Open Sans", sans-serif; text-anchor: middle; }
.tray { margin-left: auto; padding-right: 31px; display: flex; align-items: center; font-size: 17.500px; line-height: 24px; }
.tray .ico { stroke: #fff; stroke-width: 1.900; }
.tray .sync { margin-left: 26px; stroke-width: 1.200; }
.lang { width: 56px; margin-left: 16px; text-align: center; }
.wifi { margin-left: 17px; }
.speaker { margin: 0 10px; }
.clock { width: 106px; margin: -2px 12px 0 11px; text-align: right; white-space: nowrap; }
.lang { margin-top: -2px; }
```
